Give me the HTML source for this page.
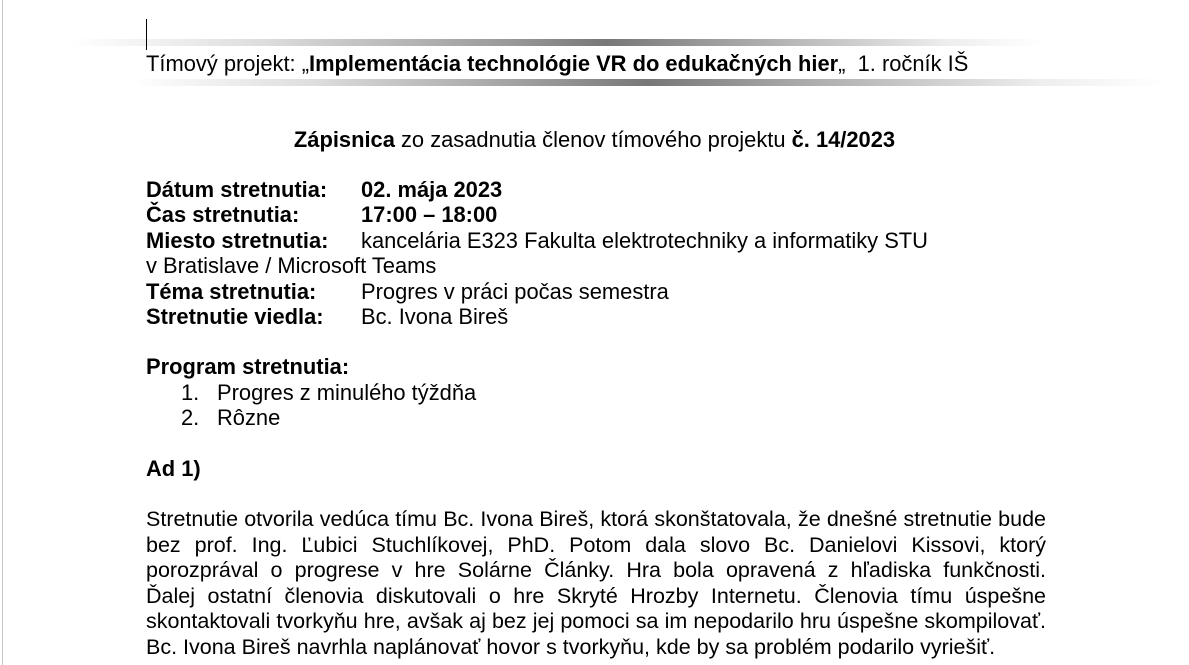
<!DOCTYPE html>
<html><head><meta charset="utf-8"><style>
body{margin:0;width:1189px;height:665px;overflow:hidden;background:#fff;position:relative;font-family:"Liberation Sans",Arial,sans-serif;font-size:21.9px;color:#000}
.l{position:absolute;white-space:nowrap;line-height:26px;height:26px}
b{font-weight:bold}
.bar{position:absolute;height:7px}
.j{position:absolute;left:146px;width:900px;line-height:25.6px;font-size:21.5px}
.j span{display:block;text-align:justify;text-align-last:justify;white-space:nowrap;height:25.6px}
</style></head><body>
<div style="position:absolute;left:2px;top:0;width:1px;height:665px;background:#c8c8c8"></div>
<div class="bar" style="left:70px;top:39px;width:975px;background:linear-gradient(to right,#fff 0%,#ddd 20%,#999 45%,#777 55%,#aaa 70%,#eee 90%,#fff 100%)"></div>
<div class="bar" style="left:130px;top:79px;width:1035px;background:linear-gradient(to right,#fff 0%,#ddd 18%,#999 40%,#777 50%,#aaa 65%,#eee 88%,#fff 100%)"></div>
<div style="position:absolute;left:146px;top:19px;width:1px;height:31px;background:#000"></div>
<div class="l" style="left:146px;top:51px;background:#fff;padding-right:4px">Tímový projekt: „<b>Implementácia technológie VR do edukačných hier</b>„&nbsp; 1. ročník IŠ</div>
<div class="l" style="left:0;width:1189px;text-align:center;top:127px"><b>Zápisnica</b> zo zasadnutia členov tímového projektu <b>č. 14/2023</b></div>
<div class="l" style="left:146px;top:177px"><b>Dátum stretnutia:</b></div><div class="l" style="left:361px;top:177px"><b>02. mája 2023</b></div>
<div class="l" style="left:146px;top:202px"><b>Čas stretnutia:</b></div><div class="l" style="left:361px;top:202px"><b>17:00 – 18:00</b></div>
<div class="l" style="left:146px;top:228px"><b>Miesto stretnutia:</b></div><div class="l" style="left:361px;top:228px">kancelária E323 Fakulta elektrotechniky a informatiky STU</div>
<div class="l" style="left:146px;top:253px">v Bratislave / Microsoft Teams</div>
<div class="l" style="left:146px;top:279px"><b>Téma stretnutia:</b></div><div class="l" style="left:361px;top:279px">Progres v práci počas semestra</div>
<div class="l" style="left:146px;top:304px"><b>Stretnutie viedla:</b></div><div class="l" style="left:361px;top:304px">Bc. Ivona Bireš</div>
<div class="l" style="left:146px;top:354px"><b>Program stretnutia:</b></div>
<div class="l" style="left:181px;top:380px">1.</div><div class="l" style="left:217px;top:380px">Progres z minulého týždňa</div>
<div class="l" style="left:181px;top:405px">2.</div><div class="l" style="left:217px;top:405px">Rôzne</div>
<div class="l" style="left:146px;top:456px"><b>Ad 1)</b></div>
<div class="j" style="top:507px">
<span>Stretnutie otvorila vedúca tímu Bc. Ivona Bireš, ktorá skonštatovala, že dnešné stretnutie bude</span>
<span>bez prof. Ing. Ľubici Stuchlíkovej, PhD. Potom dala slovo Bc. Danielovi Kissovi, ktorý</span>
<span>porozprával o progrese v hre Solárne Články. Hra bola opravená z hľadiska funkčnosti.</span>
<span>Ďalej ostatní členovia diskutovali o hre Skryté Hrozby Internetu. Členovia tímu úspešne</span>
<span>skontaktovali tvorkyňu hre, avšak aj bez jej pomoci sa im nepodarilo hru úspešne skompilovať.</span>
<span style="text-align-last:left">Bc. Ivona Bireš navrhla naplánovať hovor s tvorkyňu, kde by sa problém podarilo vyriešiť.</span>
</div>
</body></html>
